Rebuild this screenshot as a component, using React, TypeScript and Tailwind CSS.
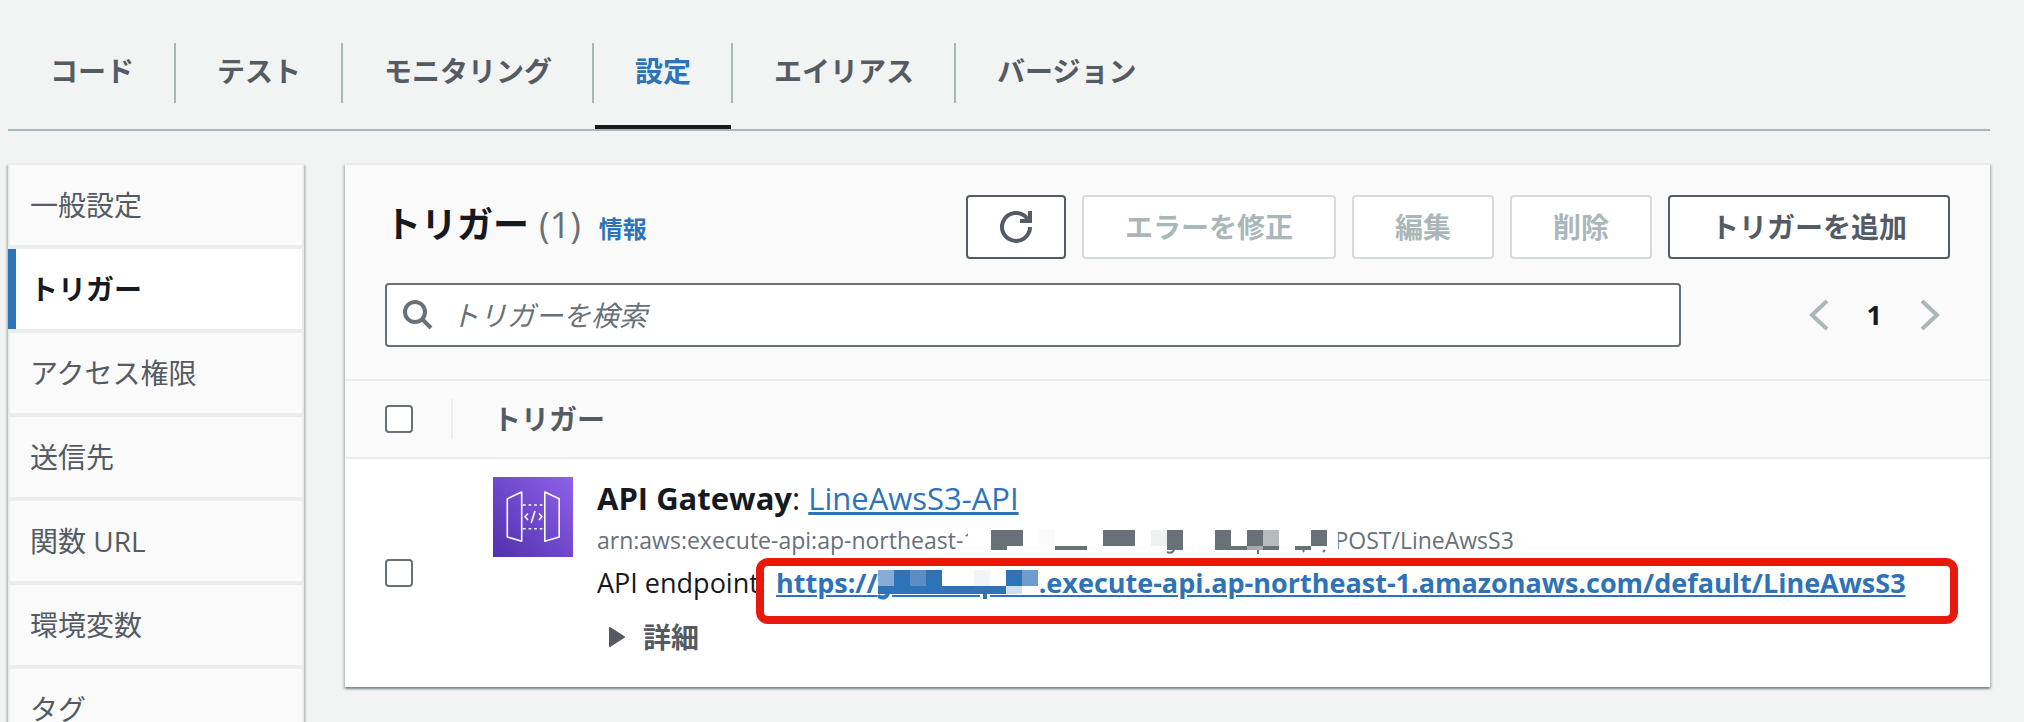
import type { ReactNode } from "react";

const tabs = [
  { label: "コード" },
  { label: "テスト" },
  { label: "モニタリング" },
  { label: "設定", active: true },
  { label: "エイリアス" },
  { label: "バージョン" },
];

const navItems = [
  { label: "一般設定" },
  { label: "トリガー", active: true },
  { label: "アクセス権限" },
  { label: "送信先" },
  { label: "関数 URL" },
  { label: "環境変数" },
  { label: "タグ" },
];

function Tabs() {
  return (
    <nav className="flex border-b-2 border-[#aab7b8] pt-[43px] pl-px">
      {tabs.map((tab, i) => (
        <div key={tab.label} className="flex">
          <a
            href="#"
            className={`ml-px flex h-[86px] flex-col justify-between ${
              tab.active ? "text-[#2e73b8]" : "text-[#545b64]"
            }`}
          >
            <span className="px-10 pt-2 text-[28px] leading-[40px] font-bold">
              {tab.label}
            </span>
            {tab.active && <span className="h-1 bg-[#16191f]" />}
          </a>
          {i < tabs.length - 1 && (
            <span className="h-[60px] w-[2px] bg-[#aab7b8]" />
          )}
        </div>
      ))}
    </nav>
  );
}

function SideNav() {
  return (
    <aside className="w-[296px] shrink-0 border-t-2 border-[#eaeded] bg-[#fafafa] shadow-[0_2px_2px_0_rgba(0,28,36,0.3),2px_2px_2px_0_rgba(0,28,36,0.15),-2px_2px_2px_0_rgba(0,28,36,0.15)]">
      <ul>
        {navItems.map((item) => (
          <li
            key={item.label}
            className="border-x-2 border-b-4 border-[#eaeded]"
          >
            <a
              href="#"
              className={`flex h-20 items-center text-[28px] leading-[40px] ${
                item.active
                  ? "-ml-[2px] border-l-8 border-[#2e73b8] bg-white pl-[14px] font-bold text-[#16191f]"
                  : "pl-5 text-[#545b64]"
              }`}
            >
              {item.label}
            </a>
          </li>
        ))}
      </ul>
    </aside>
  );
}

function Button({
  children,
  disabled,
}: {
  children: ReactNode;
  disabled?: boolean;
}) {
  return (
    <button
      type="button"
      disabled={disabled}
      className={`h-16 rounded-[4px] border-2 bg-white px-[41px] text-[28px] leading-[40px] font-bold whitespace-nowrap ${
        disabled
          ? "border-[#d5dbdb] text-[#aab7b8]"
          : "border-[#545b64] text-[#545b64]"
      }`}
    >
      {children}
    </button>
  );
}

function RefreshIcon() {
  return (
    <svg width="32" height="32" viewBox="0 0 32 32" fill="none" aria-hidden="true">
      <path
        d="M30 16A14 14 0 1 1 27.4 7.8"
        stroke="currentColor"
        strokeWidth="4"
      />
      <path d="M32 0V12H20V8H28V0Z" fill="currentColor" />
    </svg>
  );
}

function SearchIcon() {
  return (
    <svg width="30" height="30" viewBox="0 0 30 30" fill="none" aria-hidden="true">
      <circle cx="12" cy="12" r="10" stroke="currentColor" strokeWidth="4" />
      <path d="M19 19L28 28" stroke="currentColor" strokeWidth="4" />
    </svg>
  );
}

function Chevron({ flip }: { flip?: boolean }) {
  return (
    <svg width="20" height="32" viewBox="0 0 20 32" fill="none" aria-hidden="true">
      <path
        d={flip ? "M2 2L17 16L2 30" : "M18 2L3 16L18 30"}
        stroke="currentColor"
        strokeWidth="4"
      />
    </svg>
  );
}

function ApiGatewayIcon() {
  return (
    <svg
      width="80"
      height="80"
      viewBox="0 0 80 80"
      fill="none"
      className="shrink-0"
      aria-hidden="true"
    >
      <defs>
        <linearGradient id="gateway" x1="0" y1="80" x2="80" y2="0" gradientUnits="userSpaceOnUse">
          <stop stopColor="#5030ab" />
          <stop offset="1" stopColor="#8f61ec" />
        </linearGradient>
      </defs>
      <rect width="80" height="80" fill="url(#gateway)" />
      <g stroke="#fff" strokeWidth="1.6" strokeLinejoin="round">
        <path d="M14.3 21.8L28.7 15V64.3L14.3 60Z" />
        <path d="M66.2 21.8L51.8 15V64.3L66.2 60Z" />
        <path d="M30 28H51M30 51.7H51" strokeDasharray="2.6 3" />
        <path d="M35 36.5L32 39.7L35 43M46 36.5L49 39.7L46 43M42 34L38.2 46" />
      </g>
    </svg>
  );
}

// x, y, width, height, fill
const arnCells: [number, number, number, number, string][] = [
  [16, 0, 32, 16, "#687078"],
  [64, 0, 16, 16, "#fafafa"],
  [128, 0, 32, 16, "#687078"],
  [176, 0, 16, 16, "#eff0f0"],
  [192, 0, 16, 16, "#687078"],
  [240, 0, 16, 16, "#687078"],
  [272, 0, 16, 16, "#687078"],
  [288, 0, 16, 16, "#b5babd"],
  [336, 0, 16, 16, "#687078"],
  [16, 16, 16, 4, "#687078"],
  [80, 16, 32, 4, "#687078"],
  [192, 16, 16, 4, "#687078"],
  [224, 16, 16, 4, "#fafbfb"],
  [240, 16, 32, 4, "#687078"],
  [272, 16, 16, 4, "#a4aaae"],
  [288, 16, 16, 4, "#687078"],
  [320, 16, 16, 4, "#687078"],
];

const hostCells: [number, number, number, number, string][] = [
  [0, 0, 16, 16, "#86acd5"],
  [16, 0, 16, 16, "#2e73b8"],
  [32, 0, 16, 16, "#5b8dc5"],
  [48, 0, 16, 16, "#2e73b8"],
  [96, 0, 16, 16, "#f0f5fa"],
  [128, 0, 16, 16, "#2e73b8"],
  [144, 0, 16, 16, "#6f9ccf"],
  [0, 16, 128, 8, "#2e73b8"],
  [128, 16, 16, 8, "#d0dfee"],
];

function MaskedArn() {
  return (
    <svg
      width="370"
      height="26"
      viewBox="-7 -1 370 26"
      className="relative -mr-1 -ml-2 inline-block align-[-6px]"
      role="img"
      aria-label="masked"
    >
      <rect x="-7" y="-1" width="370" height="26" fill="#fff" />
      {arnCells.map(([x, y, w, h, fill]) => (
        <rect key={`${x}-${y}`} x={x} y={y} width={w} height={h} fill={fill} />
      ))}
      <path
        d="M192 22Q197 24 199 20M283 20V24M329 20L328 22M350 20L348 22"
        stroke="#687078"
        strokeWidth="2"
        fill="none"
      />
    </svg>
  );
}

function MaskedHost() {
  return (
    <svg
      width="161"
      height="30"
      viewBox="0 0 161 30"
      className="relative inline-block align-[-7px]"
      role="img"
      aria-label="masked"
    >
      {hostCells.map(([x, y, w, h, fill]) => (
        <rect key={`${x}-${y}`} x={x} y={y} width={w} height={h} fill={fill} />
      ))}
      <path d="M14 26H102M112 26H161" stroke="#2e73b8" strokeWidth="2" />
      <path d="M0 26Q8 30 10 23M107 24V29" stroke="#2e73b8" strokeWidth="4" fill="none" />
    </svg>
  );
}

function Checkbox({ label }: { label: string }) {
  return (
    <input
      type="checkbox"
      aria-label={label}
      className="block size-7 appearance-none rounded-[4px] border-2 border-[#687078] bg-white"
    />
  );
}

function TriggerTable() {
  return (
    <table className="w-full border-collapse text-left">
      <thead>
        <tr className="h-[78px] border-y-2 border-[#eaeded] bg-[#fafafa]">
          <th className="w-[108px] p-0">
            <div className="flex h-10 items-center border-r-2 border-[#eaeded] pl-10">
              <Checkbox label="すべて選択" />
            </div>
          </th>
          <th className="p-0 pl-10 text-[28px] leading-[40px] font-bold text-[#545b64]">
            トリガー
          </th>
        </tr>
      </thead>
      <tbody>
        <tr className="bg-white">
          <td className="p-0 pl-10 align-middle">
            <Checkbox label="API Gateway" />
          </td>
          <td className="p-0 pt-[18px] pb-[30px] pl-10">
            <div className="flex gap-6 whitespace-nowrap">
              <ApiGatewayIcon />
              <div className="min-w-0 flex-1 text-[#16191f]">
                <div className="text-[31px] leading-[42px]">
                  <b>API Gateway</b>:{" "}
                  <a href="#" className="text-[#2e73b8] underline">
                    LineAwsS3-API
                  </a>
                </div>
                <div className="text-[23px] leading-[42px] text-[#687078]">
                  arn:aws:execute-api:ap-northeast-1
                  <MaskedArn />
                  POST/LineAwsS3
                </div>
                <div className="relative flex gap-[10px] text-[27px] leading-[44px]">
                  <span>API endpoint:</span>
                  <a href="#" className="font-bold text-[#2e73b8] underline">
                    https://
                    <MaskedHost />
                    .execute-api.ap-northeast-1.amazonaws.com/default/LineAwsS3
                  </a>
                  <span className="pointer-events-none absolute -top-[3px] right-8 left-[159px] h-[66px] rounded-[12px] border-8 border-[#e8190c]" />
                </div>
                <button
                  type="button"
                  className="mt-3 ml-3 flex items-center gap-[18px] text-[28px] leading-[40px] font-bold text-[#545b64]"
                >
                  <svg width="16" height="20" viewBox="0 0 16 20" aria-hidden="true">
                    <path
                      d="M1 1L15 10L1 19Z"
                      fill="currentColor"
                      stroke="currentColor"
                      strokeWidth="2"
                      strokeLinejoin="round"
                    />
                  </svg>
                  詳細
                </button>
              </div>
            </div>
          </td>
        </tr>
      </tbody>
    </table>
  );
}

function TriggerPanel() {
  return (
    <section className="min-w-0 flex-1 self-start border-t-2 border-[#eaeded] bg-[#fafafa] shadow-[0_2px_2px_0_rgba(0,28,36,0.3),2px_2px_2px_0_rgba(0,28,36,0.15),-2px_2px_2px_0_rgba(0,28,36,0.15)]">
      <div className="px-10 pt-[30px] pb-8">
        <div className="flex items-center justify-between">
          <h2 className="flex items-baseline text-[36px] leading-[44px] font-bold text-[#16191f]">
            トリガー
            <span className="ml-[10px] font-medium text-[#687078]">(1)</span>
            <a href="#" className="ml-[18px] text-[24px] text-[#2e73b8]">
              情報
            </a>
          </h2>
          <div className="flex gap-4">
            <button
              type="button"
              aria-label="更新"
              className="flex h-16 w-[100px] items-center justify-center rounded-[4px] border-2 border-[#545b64] bg-white text-[#545b64]"
            >
              <RefreshIcon />
            </button>
            <Button disabled>エラーを修正</Button>
            <Button disabled>編集</Button>
            <Button disabled>削除</Button>
            <Button>トリガーを追加</Button>
          </div>
        </div>

        <div className="mt-6 flex items-center">
          <label className="flex h-16 flex-1 items-center gap-[18px] rounded-[4px] border-2 border-[#687078] bg-white pl-4 text-[#687078]">
            <SearchIcon />
            <input
              type="search"
              placeholder="トリガーを検索"
              aria-label="トリガーを検索"
              className="min-w-0 flex-1 bg-transparent text-[28px] leading-[40px] outline-none placeholder:text-[#687078] placeholder:italic"
            />
          </label>
          <div className="flex w-[269px] items-center justify-end gap-[38px] pr-[10px] text-[#aab7b8]">
            <button type="button" aria-label="前のページ" disabled>
              <Chevron />
            </button>
            <span className="text-[27px] leading-[40px] font-bold text-[#16191f]">
              1
            </span>
            <button type="button" aria-label="次のページ" disabled>
              <Chevron flip />
            </button>
          </div>
        </div>
      </div>

      <TriggerTable />
    </section>
  );
}

export default function App() {
  return (
    <div className="h-screen overflow-hidden bg-[#f2f3f3] pr-[34px] pl-2 font-['Open_Sans','Noto_Sans_CJK_JP',sans-serif]">
      <Tabs />
      <div className="mt-8 flex gap-[41px]">
        <SideNav />
        <TriggerPanel />
      </div>
    </div>
  );
}
